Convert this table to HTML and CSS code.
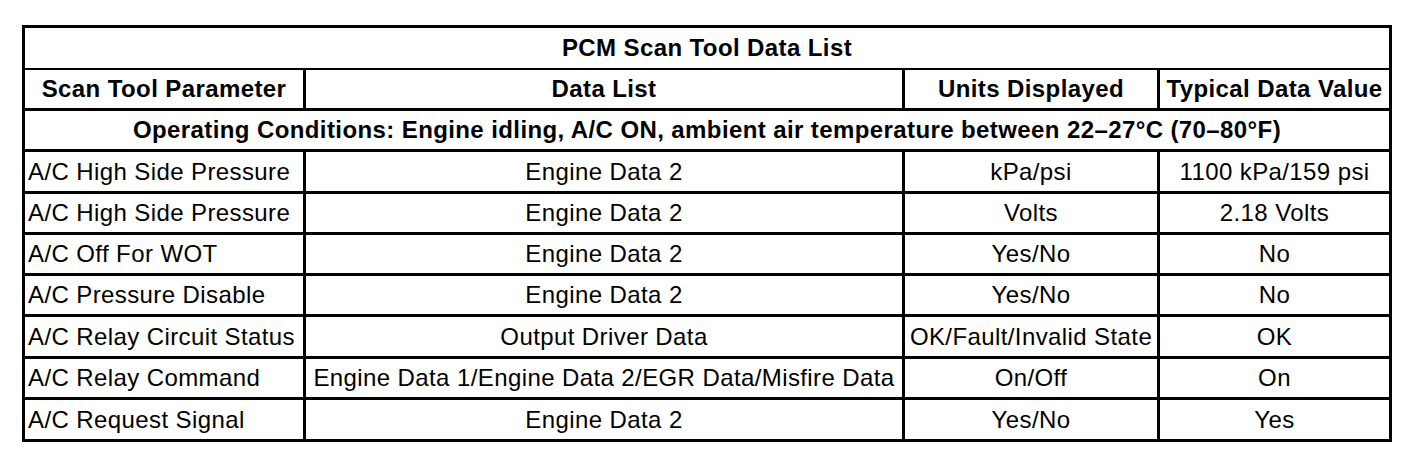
FILE: index.html
```html
<!DOCTYPE html>
<html>
<head>
<meta charset="utf-8">
<title>PCM Scan Tool Data List</title>
<link rel="stylesheet" href="styles.css">
</head>
<body>
<table class="scan-table">
  <colgroup>
    <col class="c1"><col class="c2"><col class="c3"><col class="c4">
  </colgroup>
  <tr class="r-title"><td class="title" colspan="4">PCM Scan Tool Data List</td></tr>
  <tr class="r-head">
    <th>Scan Tool Parameter</th>
    <th>Data List</th>
    <th>Units Displayed</th>
    <th class="last">Typical Data Value</th>
  </tr>
  <tr class="r-cond"><td class="cond" colspan="4">Operating Conditions: Engine idling, A/C ON, ambient air temperature between 22–27°C (70–80°F)</td></tr>
  <tr class="r-a">
    <td class="param">A/C High Side Pressure</td><td>Engine Data 2</td><td>kPa/psi</td><td class="last">1100 kPa/159 psi</td>
  </tr>
  <tr class="r-b">
    <td class="param">A/C High Side Pressure</td><td>Engine Data 2</td><td>Volts</td><td class="last">2.18 Volts</td>
  </tr>
  <tr class="r-b">
    <td class="param">A/C Off For WOT</td><td>Engine Data 2</td><td>Yes/No</td><td class="last">No</td>
  </tr>
  <tr class="r-b">
    <td class="param">A/C Pressure Disable</td><td>Engine Data 2</td><td>Yes/No</td><td class="last">No</td>
  </tr>
  <tr class="r-a">
    <td class="param">A/C Relay Circuit Status</td><td>Output Driver Data</td><td>OK/Fault/Invalid State</td><td class="last">OK</td>
  </tr>
  <tr class="r-b">
    <td class="param">A/C Relay Command</td><td>Engine Data 1/Engine Data 2/EGR Data/Misfire Data</td><td>On/Off</td><td class="last">On</td>
  </tr>
  <tr class="r-end">
    <td class="param">A/C Request Signal</td><td>Engine Data 2</td><td>Yes/No</td><td class="last">Yes</td>
  </tr>
</table>
</body>
</html>
```
FILE: styles.css
```css
html, body {
  margin: 0;
  padding: 0;
  background: #ffffff;
}
body {
  padding: 25px 0 0 22px;
  font-family: "Liberation Sans", Arial, sans-serif;
  color: #000000;
}
.scan-table {
  border-collapse: separate;
  border-spacing: 0;
  border: 3px solid #000;
  table-layout: fixed;
  width: 1370px;
  font-size: 24px;
  letter-spacing: 0.4px;
}
.c1 { width: 281px; }
.c2 { width: 599px; }
.c3 { width: 255px; }
.c4 { width: 229px; }
.scan-table td,
.scan-table th {
  padding: 0;
  text-align: center;
  vertical-align: middle;
  white-space: nowrap;
  border-right: 3px solid #000;
  border-bottom: 3px solid #000;
  line-height: 1;
  overflow: visible;
}
.scan-table th {
  font-weight: bold;
}
.scan-table .last {
  border-right: none;
}
.scan-table .title,
.scan-table .cond {
  border-right: none;
  font-weight: bold;
}
.scan-table .title {
  border-bottom: 2px solid #000;
}
.scan-table .param {
  text-align: left;
  padding-left: 3px;
}
.r-title { height: 42px; }
.r-head { height: 41px; }
.r-cond { height: 41px; }
.r-a { height: 42px; }
.r-b { height: 41px; }
.r-end { height: 39px; }
.r-end td { border-bottom: none; }
```
